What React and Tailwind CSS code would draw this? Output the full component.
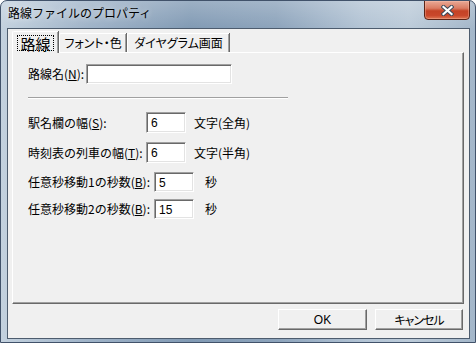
export default function App() {
  const inputCls =
    "h-[20px] bg-white border border-t-[#a0a0a0] border-l-[#a0a0a0] border-b-white border-r-white shadow-[inset_1px_1px_0_#696969,inset_-1px_-1px_0_#e3e3e3] pl-[4px] text-[12px] leading-[20px] font-['Liberation_Sans',sans-serif]";
  return (
    <div className="w-[476px] h-[343px] flex flex-col rounded-t-[7px] border border-[#41526a] overflow-hidden bg-[linear-gradient(180deg,rgba(255,255,255,0.22)_0px,rgba(255,255,255,0)_28px),linear-gradient(90deg,#c3d1de_0%,#9fb3c8_18%,#819ab4_40%,#8ca3bb_58%,#b2c3d4_76%,#bccbd9_86%,#a3b6c9_100%)] font-['Noto_Sans_CJK_JP',sans-serif] text-[12px] text-black">
      {/* title bar */}
      <div className="h-[27px] flex items-start justify-between pl-[7px] pr-[5px] shrink-0">
        <span className="mt-[5px] text-[12px] leading-[14px] [text-shadow:0_0_6px_rgba(255,255,255,0.8)]">
          路線ファイルのプロパティ
        </span>
        <div className="-mt-px w-[46px] h-[20px] rounded-b-[4px] border border-[#5b2417] bg-[linear-gradient(180deg,#e9a996_0%,#da7c63_40%,#c44326_55%,#c9472b_80%,#de7552_100%)] flex items-center justify-center shadow-[inset_0_0_0_1px_rgba(255,200,180,0.35)]">
          <svg width="13" height="11" viewBox="0 0 13 11">
            <path d="M2.5 2 L10.5 9 M10.5 2 L2.5 9" stroke="#3d4a5a" strokeWidth="4.2" strokeLinecap="square" />
            <path d="M2.5 2 L10.5 9 M10.5 2 L2.5 9" stroke="#ffffff" strokeWidth="2.2" strokeLinecap="square" />
          </svg>
        </div>
      </div>

      {/* client */}
      <div className="flex-1 ml-[6px] mr-[5px] mb-[3px] border border-[#4d5c6e] bg-[#f0f0f0] flex flex-col">
        {/* tabs */}
        <div className="mt-[2px] ml-[4px] h-[21px] flex items-end [font-feature-settings:'palt'] shrink-0">
          <div className="relative z-10 -mb-px h-[22px] w-[46px] bg-[#f0f0f0] border-t border-l border-white rounded-tl-[2px] shadow-[inset_-1px_0_0_#a0a0a0,1px_0_0_#696969] flex items-center justify-center">
            <span className="border border-dotted border-black px-[2px] h-[16px] flex items-center text-[15px] leading-[15px] mt-[1px]">
              路線
            </span>
          </div>
          <div className="h-[19px] w-[67px] ml-px border-t border-l border-white shadow-[inset_-1px_0_0_#a0a0a0,1px_0_0_#696969] rounded-tl-[2px] flex items-center justify-center text-[12px] leading-[14px]">
            フォント・色
          </div>
          <div className="h-[19px] w-[102px] ml-px border-t border-l border-white shadow-[inset_-1px_0_0_#a0a0a0,1px_0_0_#696969] rounded-tl-[2px] flex items-center justify-center text-[12px] leading-[14px]">
            ダイヤグラム画面
          </div>
        </div>

        {/* page */}
        <div className="ml-[4px] mr-[5px] h-[252px] border-t border-l border-white border-r border-b border-r-[#696969] border-b-[#696969] shadow-[inset_-1px_-1px_0_#a0a0a0] flex flex-col pl-[15px] shrink-0">
          <div className="mt-[11px] flex items-center h-[20px]">
            <span className="w-[58px]">
              路線名(<u>N</u>):
            </span>
            <div className={inputCls + " w-[146px]"}></div>
          </div>
          <div className="mt-[13px] w-[260px] h-[2px] border-t border-[#a0a0a0] border-b border-b-white"></div>
          <div className="mt-[13px] flex items-center h-[21px]">
            <span className="w-[118px]">
              駅名欄の幅(<u>S</u>):
            </span>
            <div className={inputCls + " w-[40px] h-[21px]"}>6</div>
            <span className="ml-[8px]">文字(全角)</span>
          </div>
          <div className="mt-[9px] flex items-center h-[21px]">
            <span className="w-[118px]">
              時刻表の列車の幅(<u>T</u>):
            </span>
            <div className={inputCls + " w-[40px] h-[21px]"}>6</div>
            <span className="ml-[8px]">文字(半角)</span>
          </div>
          <div className="mt-[9px] flex items-center h-[20px]">
            <span className="w-[126px]">
              任意秒移動1の秒数(<u>B</u>):
            </span>
            <div className={inputCls + " w-[40px]"}>5</div>
            <span className="ml-[11px]">秒</span>
          </div>
          <div className="mt-[7px] flex items-center h-[20px]">
            <span className="w-[126px]">
              任意秒移動2の秒数(<u>B</u>):
            </span>
            <div className={inputCls + " w-[40px]"}>15</div>
            <span className="ml-[11px]">秒</span>
          </div>
        </div>

        {/* buttons */}
        <div className="mt-[5px] mr-[6px] flex justify-end gap-[8px] [font-feature-settings:'palt'] shrink-0">
          <div className="w-[89px] h-[21px] border border-t-white border-l-white border-r-[#696969] border-b-[#696969] shadow-[inset_-1px_-1px_0_#a0a0a0] bg-[#f0f0f0] flex items-center justify-center text-[12px] font-['Liberation_Sans',sans-serif]">
            OK
          </div>
          <div className="w-[88px] h-[21px] border border-t-white border-l-white border-r-[#696969] border-b-[#696969] shadow-[inset_-1px_-1px_0_#a0a0a0] bg-[#f0f0f0] flex items-center justify-center text-[12px] tracking-[-1px]">
            キャンセル
          </div>
        </div>
      </div>
    </div>
  );
}
